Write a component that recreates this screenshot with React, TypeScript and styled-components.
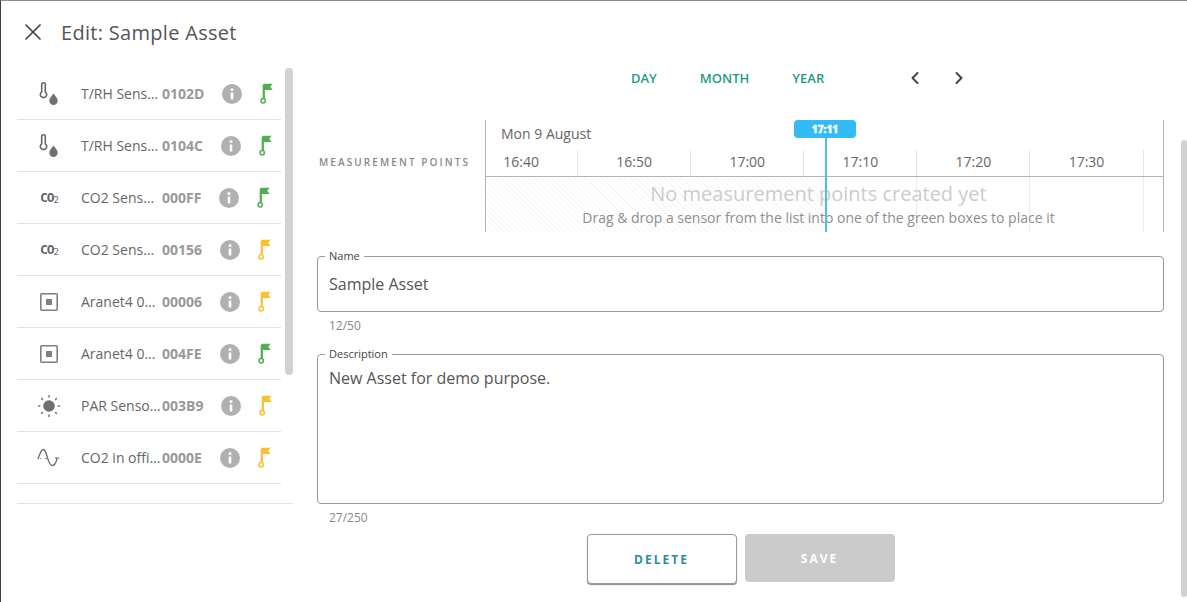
import { ChevronLeft, ChevronRight, X } from "lucide-react";
import styled, { createGlobalStyle } from "styled-components";

const GlobalStyle = createGlobalStyle`
    html, body {
        margin: 0;
        padding: 0;
        background: #fff;
    }
    * {
        box-sizing: border-box;
    }
`;

type SensorKind = "trh" | "co2" | "aranet" | "par" | "virtual";

const sensors: { kind: SensorKind; name: string; code: string; placed: boolean }[] = [
    { kind: "trh", name: "T/RH Sensor 1", code: "0102D", placed: true },
    { kind: "trh", name: "T/RH Sensor 2", code: "0104C", placed: true },
    { kind: "co2", name: "CO2 Sensor 1", code: "000FF", placed: true },
    { kind: "co2", name: "CO2 Sensor 2", code: "00156", placed: false },
    { kind: "aranet", name: "Aranet4 00006", code: "00006", placed: false },
    { kind: "aranet", name: "Aranet4 004FE", code: "004FE", placed: true },
    { kind: "par", name: "PAR Sensor 1", code: "003B9", placed: false },
    { kind: "virtual", name: "CO2 in office", code: "0000E", placed: false },
];

const times = ["16:40", "16:50", "17:00", "17:10", "17:20", "17:30", ""];

const SensorIcon = ({ kind }: { kind: SensorKind }) => {
    if (kind === "co2") {
        return <Co2Glyph>CO<sub>2</sub></Co2Glyph>;
    }
    if (kind === "trh") {
        return (
            <svg width="24" height="24" viewBox="0 0 24 24">
                <path d="M4.700 2.600a1.800 1.800 0 0 1 3.600 0v7.200a3.200 3.200 0 1 1-3.600 0z" fill="none" stroke="#666" strokeWidth="1.600" />
                <path d="M16.500 11.500c2 2.600 4.200 4.900 4.200 7.300a4.200 4.200 0 0 1-8.400 0c0-2.400 2.200-4.700 4.200-7.300z" fill="#707070" />
            </svg>
        );
    }
    if (kind === "aranet") {
        return (
            <svg width="20" height="20" viewBox="0 0 20 20">
                <rect x="1.800" y="1.800" width="16.400" height="16.400" rx="1" fill="none" stroke="#808080" strokeWidth="1.600" />
                <rect x="7" y="7" width="6" height="6" fill="#808080" />
            </svg>
        );
    }
    if (kind === "par") {
        return (
            <svg width="24" height="24" viewBox="0 0 24 24">
                <circle cx="12" cy="12" r="5.800" fill="#707070" />
                <g stroke="#777" strokeWidth="1.500" strokeLinecap="round">
                    <path d="M12 1.500v1.400M12 21.100v1.400M1.500 12h1.400M21.100 12h1.400M4.600 4.600l.9.900M18.500 18.500l.9.900M4.600 19.400l.9-.9M18.500 5.500l.9-.9" />
                </g>
            </svg>
        );
    }
    return (
        <svg width="24" height="20" viewBox="0 0 24 20">
            <path d="M.8 11C2.800 7 3.800 1.500 6.300 1.500c4 0 4 16 9 16 3.500 0 4-4.500 4.800-7.500" fill="none" stroke="#666" strokeWidth="1.300" />
            <path d="M2.800 10.500h1M8.300 10.500h1.500M18 10h4.200" stroke="#666" strokeWidth="1.200" />
        </svg>
    );
};

const InfoIcon = () => (
    <svg width="20" height="20" viewBox="0 0 20 20">
        <circle cx="10" cy="10" r="10" fill="#b0b0b0" />
        <circle cx="10" cy="5.600" r="1.500" fill="#fff" />
        <rect x="8.700" y="8.400" width="2.600" height="7" rx="0.400" fill="#fff" />
    </svg>
);

const FlagIcon = ({ color }: { color: string }) => (
    <svg width="14" height="21" viewBox="0 0 14 21">
        <path d="M3.800 1.500V16" stroke={color} strokeWidth="2.200" fill="none" />
        <path d="M3.800 .800h8.900l-2.500 3 2.500 3.200H3.800z" fill={color} />
        <circle cx="3.200" cy="17.800" r="2.200" fill="#fff" stroke={color} strokeWidth="1.500" />
    </svg>
);

const App = () => {
    return (
        <Page>
            <GlobalStyle />
            <Header>
                <CloseButton><X size={28} strokeWidth={1.500} /></CloseButton>
                <Title>Edit: Sample Asset</Title>
            </Header>
            <Body>
                <Sidebar>
                    <SidebarThumb />
                    <SensorList>
                        {sensors.map((sensor) => (
                            <SensorRow key={sensor.code}>
                                <IconSlot><SensorIcon kind={sensor.kind} /></IconSlot>
                                <SensorName>{sensor.name}</SensorName>
                                <SensorCode>{sensor.code}</SensorCode>
                                <InfoSlot><InfoIcon /></InfoSlot>
                                <FlagSlot><FlagIcon color={sensor.placed ? "#4caf50" : "#fbc02d"} /></FlagSlot>
                            </SensorRow>
                        ))}
                    </SensorList>
                </Sidebar>
                <Content>
                    <RangeBar>
                        <RangeTab>DAY</RangeTab>
                        <RangeTab>MONTH</RangeTab>
                        <RangeTab>YEAR</RangeTab>
                        <Arrows>
                            <ChevronLeft size={20} strokeWidth={2.400} color="#444" />
                            <ChevronRight size={20} strokeWidth={2.400} color="#444" />
                        </Arrows>
                    </RangeBar>
                    <TimelineRow>
                        <TimelineLabel>MEASUREMENT POINTS</TimelineLabel>
                        <Timeline>
                            <DateLabel>Mon 9 August</DateLabel>
                            <TimeTrack>
                                {times.map((time, index) => (
                                    <TimeCell key={index}>{time}</TimeCell>
                                ))}
                            </TimeTrack>
                            <GridTrack>
                                {times.map((_, index) => (
                                    <GridCell key={index} />
                                ))}
                                <PastHatch />
                                <EmptyMessage>
                                    <EmptyTitle>No measurement points created yet</EmptyTitle>
                                    <EmptyHint>Drag &amp; drop a sensor from the list into one of the green boxes to place it</EmptyHint>
                                </EmptyMessage>
                            </GridTrack>
                            <NowLine />
                            <NowBadge>17:11</NowBadge>
                        </Timeline>
                    </TimelineRow>
                    <NameField>
                        <FieldLegend>Name</FieldLegend>
                        <NameInput value="Sample Asset" readOnly />
                    </NameField>
                    <Counter>12/50</Counter>
                    <DescriptionField>
                        <FieldLegend>Description</FieldLegend>
                        <DescriptionInput value="New Asset for demo purpose." readOnly />
                    </DescriptionField>
                    <Counter>27/250</Counter>
                    <Actions>
                        <DeleteButton>DELETE</DeleteButton>
                        <SaveButton disabled>SAVE</SaveButton>
                    </Actions>
                </Content>
            </Body>
            <PageThumb />
        </Page>
    );
};

const Page = styled.div`
    position: relative;
    width: 1187px;
    height: 602px;
    overflow: hidden;
    background: #fff;
    border-top: 1px solid #8c8c8c;
    border-left: 1px solid #4a3a40;
    font-family: "Open Sans", "Liberation Sans", sans-serif;
    color: #555;
`;

const Header = styled.header`
    display: flex;
    align-items: center;
    height: 57px;
    padding: 5px 0 0 18px;
`;

const CloseButton = styled.div`
    display: flex;
    width: 28px;
    height: 28px;
    color: #444;
`;

const Title = styled.h1`
    margin: 0 0 0 14px;
    font-size: 20px;
    font-weight: 400;
    letter-spacing: 0.3px;
    color: #555;
`;

const Body = styled.div`
    display: grid;
    grid-template-columns: 292px 1fr;
`;

const Sidebar = styled.aside`
    position: relative;
    height: 446px;
    margin-left: 16px;
    padding-top: 10px;
    border-bottom: 1px solid #e2e2e2;
`;

const SidebarThumb = styled.div`
    position: absolute;
    top: 10px;
    right: 0;
    width: 8px;
    height: 307px;
    border-radius: 4px;
    background: #d2d2d2;
`;

const SensorList = styled.ul`
    width: 264px;
    margin: 0;
    padding: 0;
    list-style: none;
`;

const SensorRow = styled.li`
    display: flex;
    align-items: center;
    height: 52px;
    border-bottom: 1px solid #e2e2e2;
`;

const IconSlot = styled.div`
    display: flex;
    flex: none;
    align-items: center;
    justify-content: center;
    width: 64px;
`;

const Co2Glyph = styled.span`
    font-family: "DejaVu Sans Mono", "Liberation Mono", monospace;
    font-size: 13px;
    font-weight: 700;
    letter-spacing: -1px;
    color: #666;

    sub {
        font-size: 9px;
        font-weight: 400;
        vertical-align: -1px;
    }
`;

const SensorName = styled.span`
    flex: none;
    width: 81px;
    overflow: hidden;
    font-size: 14px;
    white-space: nowrap;
    text-overflow: ellipsis;
    color: #666;
`;

const SensorCode = styled.span`
    flex: none;
    font-size: 14px;
    font-weight: 700;
    color: #999;
`;

const InfoSlot = styled.div`
    display: flex;
    flex: none;
    margin-left: 18px;
`;

const FlagSlot = styled.div`
    display: flex;
    flex: none;
    margin-left: 18px;
`;

const Content = styled.main`
    display: flex;
    flex-direction: column;
    min-width: 0;
    padding: 0 23px 0 24px;
`;

const RangeBar = styled.nav`
    display: flex;
    align-items: center;
    gap: 43px;
    height: 40px;
    padding-left: 314px;
`;

const RangeTab = styled.span`
    font-size: 13px;
    font-weight: 600;
    color: #1f9a8a;
`;

const Arrows = styled.div`
    display: flex;
    gap: 24px;
    margin-left: 38px;
`;

const TimelineRow = styled.section`
    display: flex;
    margin-top: 22px;
`;

const TimelineLabel = styled.div`
    flex: none;
    width: 168px;
    padding: 35px 0 0 2px;
    font-size: 10px;
    font-weight: 600;
    line-height: 14px;
    letter-spacing: 2.100px;
    white-space: nowrap;
    color: #888;
`;

const Timeline = styled.div`
    position: relative;
    flex: 1;
    min-width: 0;
    height: 112px;
    border-left: 1px solid #b5b5b5;
    border-right: 1px solid #b5b5b5;
`;

const DateLabel = styled.div`
    height: 30px;
    padding: 5px 0 0 15px;
    font-size: 14px;
    line-height: 18px;
    color: #666;
`;

const TimeTrack = styled.div`
    display: flex;
    height: 27px;
    margin-left: -21px;
    border-bottom: 1px solid #b5b5b5;
    clip-path: inset(0 0 0 21px);
`;

const TimeCell = styled.div`
    flex: none;
    width: 113.100px;
    height: 26px;
    font-size: 14px;
    line-height: 24px;
    text-align: center;
    color: #666;
    border-right: 1px solid #e6e6e6;
`;

const GridTrack = styled.div`
    position: relative;
    display: flex;
    height: 55px;
    margin-left: -21px;
    clip-path: inset(0 0 0 21px);
`;

const GridCell = styled.div`
    flex: none;
    width: 113.100px;
    border-right: 1px solid #ececec;
`;

const PastHatch = styled.div`
    position: absolute;
    top: 0;
    bottom: 0;
    left: 21px;
    width: 340px;
    background: repeating-linear-gradient(45deg, #f7f7f7 0 1px, #fff 1px 4px);
`;

const EmptyMessage = styled.div`
    position: absolute;
    top: 4px;
    left: 21px;
    right: 0;
    display: flex;
    flex-direction: column;
    align-items: center;
    padding-right: 12px;
    white-space: nowrap;
`;

const EmptyTitle = styled.div`
    font-size: 20px;
    line-height: 26px;
    color: #ccc;
`;

const EmptyHint = styled.div`
    font-size: 14px;
    line-height: 22px;
    color: #8e8e8e;
`;

const NowLine = styled.div`
    position: absolute;
    top: 18px;
    bottom: 0;
    left: 339px;
    width: 2px;
    background: #55bde0;
`;

const NowBadge = styled.div`
    position: absolute;
    top: 0;
    left: 308px;
    width: 62px;
    height: 18px;
    border-radius: 4px;
    font-size: 10px;
    font-weight: 800;
    line-height: 18px;
    text-align: center;
    color: #fff;
    background: #33bbf5;
    -webkit-text-stroke: 0.3px #fff;
`;

const NameField = styled.fieldset`
    height: 63px;
    min-width: 0;
    margin: 17px 0 0;
    padding: 0 7px;
    border: 1px solid #999;
    border-radius: 4px;
`;

const DescriptionField = styled(NameField)`
    height: 157px;
    margin-top: 7px;
`;

const FieldLegend = styled.legend`
    margin-left: 0;
    padding: 0 4px;
    font-size: 11px;
    line-height: 14px;
    color: #444;
`;

const NameInput = styled.input`
    display: block;
    width: 100%;
    height: 40px;
    margin-top: 1px;
    padding: 0 4px;
    border: 0;
    outline: 0;
    font-family: inherit;
    font-size: 16px;
    color: #555;
    background: none;
`;

const DescriptionInput = styled.textarea`
    display: block;
    width: 100%;
    height: 120px;
    margin-top: 2px;
    padding: 4px;
    border: 0;
    outline: 0;
    resize: none;
    font-family: inherit;
    font-size: 16px;
    line-height: 22px;
    color: #555;
    background: none;
`;

const Counter = styled.div`
    height: 28px;
    padding-left: 12px;
    font-size: 12px;
    line-height: 28px;
    color: #888;
`;

const Actions = styled.div`
    display: flex;
    align-items: flex-start;
    justify-content: center;
    gap: 8px;
    margin-top: 2px;
`;

const DeleteButton = styled.button`
    width: 150px;
    height: 50px;
    border: 1px solid #9a9a9a;
    border-radius: 4px;
    font-family: inherit;
    font-size: 12px;
    font-weight: 700;
    letter-spacing: 2px;
    color: #2b8f9b;
    background: #fff;
    box-shadow: 0 1px 1px #888;
`;

const SaveButton = styled.button`
    width: 150px;
    height: 48px;
    border: 0;
    border-radius: 4px;
    font-family: inherit;
    font-size: 12px;
    font-weight: 700;
    letter-spacing: 2px;
    color: #fff;
    background: #cbcbcb;
`;

const PageThumb = styled.div`
    position: absolute;
    top: 139px;
    right: 0;
    width: 6px;
    height: 457px;
    border-radius: 3px;
    background: #d2d2d2;
`;

export default App;
